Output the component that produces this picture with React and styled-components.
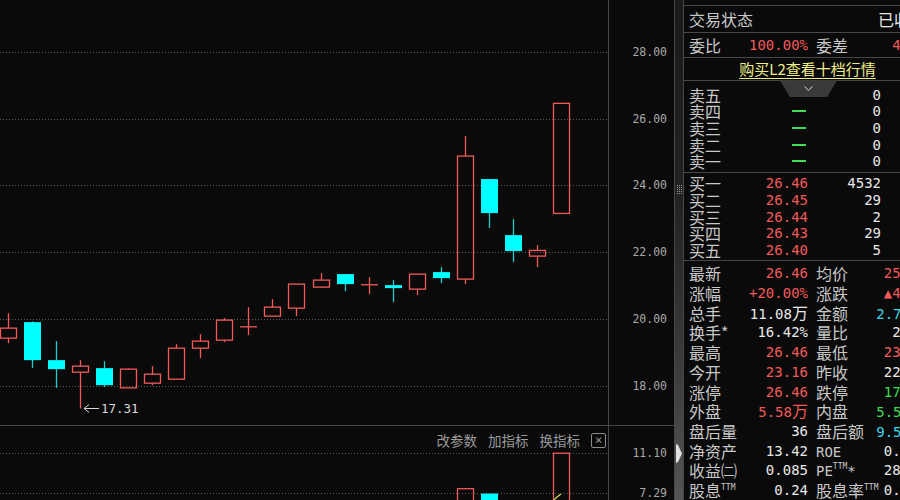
import React from 'react';
import styled, { createGlobalStyle } from 'styled-components';
import { ChevronDown } from 'lucide-react';

const RED = '#f25a5a';
const CYAN = '#00ffff';
const GREEN = '#3fdc55';
const LINE = '#474747';
const CJK = `"Noto Sans CJK SC", "Noto Sans", sans-serif`;
const MONO = `"DejaVu Sans Mono", "Liberation Mono", "Noto Sans CJK SC", monospace`;

const tones = {
  label: '#c8c8c8',
  white: '#e8e8e8',
  red: RED,
  green: GREEN,
  cyan: '#3cd6e6',
};

// o, h, l, c, volume (万)
const candles = [
  [19.42, 20.17, 19.27, 19.72, 3.1],
  [19.9, 19.92, 18.52, 18.76, 4.2],
  [18.76, 19.33, 17.93, 18.49, 3.6],
  [18.4, 18.76, 17.31, 18.58, 3.9],
  [18.52, 18.73, 17.96, 18.01, 2.8],
  [17.93, 18.52, 17.93, 18.49, 2.5],
  [18.07, 18.58, 18.01, 18.34, 2.2],
  [18.19, 19.24, 18.19, 19.12, 3.4],
  [19.12, 19.54, 18.82, 19.33, 3.0],
  [19.36, 20.02, 19.3, 19.96, 3.3],
  [19.74, 20.35, 19.51, 19.76, 2.9],
  [20.08, 20.59, 20.08, 20.35, 2.6],
  [20.32, 21.04, 20.08, 21.04, 3.5],
  [20.95, 21.37, 20.92, 21.16, 2.7],
  [21.34, 21.34, 20.83, 21.04, 2.4],
  [21.0, 21.25, 20.74, 21.02, 2.1],
  [21.01, 21.16, 20.5, 20.92, 2.3],
  [20.89, 21.34, 20.71, 21.34, 2.6],
  [21.4, 21.55, 21.07, 21.22, 2.2],
  [21.19, 25.48, 21.04, 24.88, 7.7],
  [24.19, 24.19, 22.72, 23.17, 7.24],
  [22.51, 22.99, 21.7, 22.03, 5.1],
  [21.88, 22.21, 21.55, 22.05, 3.8],
  [23.16, 26.46, 23.16, 26.46, 11.08],
];

const priceTicks = [28, 26, 24, 22, 20, 18];
const toY = p => 52 + (28 - p) * 33.35;
const toX = i => Math.round(8 + i * 24.04);
const volY = v => 27 + (11.1 - v) * 10.5;

const GlobalStyle = createGlobalStyle`
  html, body {
    margin: 0;
    overflow: hidden;
    background: #0a0a0a;
  }
`;

const Page = styled.div`
  display: flex;
  width: 930px;
  height: 500px;
  background: #0a0a0a;
`;

const ChartColumn = styled.div`
  flex: 0 0 674px;
  display: flex;
  flex-direction: column;
`;

const Pane = styled.div`
  display: flex;
  height: ${p => p.$h}px;
  box-sizing: border-box;
  border-bottom: ${p => (p.$divided ? `1px solid ${LINE}` : 'none')};
`;

const Plot = styled.div`
  position: relative;
  flex: 0 0 608px;
  overflow: hidden;
  svg {
    display: block;
  }
`;

const Axis = styled.div`
  flex: 1;
  border-left: 1px solid ${LINE};
  svg {
    display: block;
  }
`;

const Toolbar = styled.div`
  position: absolute;
  top: 6px;
  right: 2px;
  display: flex;
  align-items: center;
  gap: 11px;
  font-family: ${CJK};
  font-size: 13.5px;
  line-height: 16px;
  color: #9a9a9a;
`;

const CloseBox = styled.span`
  display: flex;
  align-items: center;
  justify-content: center;
  width: 13px;
  height: 13px;
  border: 1px solid #8a8a8a;
  border-radius: 2px;
  font-family: ${MONO};
  font-size: 12px;
  line-height: 1;
  color: #9a9a9a;
`;

const Splitter = styled.div`
  flex: 0 0 9px;
  box-sizing: border-box;
  border-left: 1px solid ${LINE};
  display: flex;
  flex-direction: column;
  align-items: center;
  background: linear-gradient(to bottom, #1a1a1a 0%, #222 40%, #3d3d3d 75%, #555 100%);
`;

const Grip = styled.svg`
  margin-top: 185px;
`;

const Handle = styled.svg`
  margin-top: 250px;
`;

const Panel = styled.aside`
  flex: 0 0 247px;
  box-sizing: border-box;
  border-left: 1px solid ${LINE};
  padding-top: 5px;
  display: flex;
  flex-direction: column;
  color: #c8c8c8;
  font-family: ${CJK};
`;

const Section = styled.div`
  position: relative;
  border-top: 1px solid ${LINE};
  height: ${p => p.$h}px;
  padding: ${p => p.$pt || 0}px 4px 0 5px;
  box-sizing: border-box;
  display: flex;
  flex-direction: column;
  justify-content: ${p => (p.$center ? 'center' : 'flex-start')};
`;

const StatusRow = styled.div`
  display: flex;
  align-items: center;
  justify-content: space-between;
`;

const Grid = styled.div`
  display: grid;
  grid-template-columns: 56px 63px 62px 56px;
  align-items: center;
  height: ${p => p.$h}px;
`;

const OrderRow = styled.div`
  display: grid;
  grid-template-columns: 56px 63px 73px;
  align-items: center;
  height: 16.7px;
`;

const Label = styled.span`
  font-family: ${CJK};
  font-size: 16px;
  line-height: 16px;
  color: ${p => tones[p.$tone || 'label']};
  white-space: nowrap;
  padding-left: ${p => (p.$indent ? 8 : 0)}px;
`;

const Latin = styled.span`
  font-family: ${MONO};
  font-size: 14px;
`;

const Sup = styled.sup`
  font-family: ${MONO};
  font-size: 8px;
  vertical-align: 7px;
  line-height: 0;
`;

const Value = styled.span`
  font-family: ${MONO};
  font-size: 14px;
  line-height: 16px;
  text-align: right;
  white-space: nowrap;
  color: ${p => tones[p.$tone || 'white']};
`;

const Unit = styled.span`
  font-family: ${CJK};
  font-size: 16px;
`;

const Dash = styled.span`
  justify-self: end;
  width: 14px;
  height: 2px;
  margin-right: 2px;
  background: ${GREEN};
`;

const Promo = styled.a`
  align-self: center;
  font-size: 15px;
  line-height: 18px;
  color: #eeee88;
  text-decoration: underline;
  text-underline-offset: 3px;
  cursor: pointer;
`;

const Tab = styled.div`
  position: absolute;
  top: -1px;
  left: 96px;
  width: 57px;
  height: 17px;
  display: flex;
  justify-content: center;
  align-items: center;
  background: #3a3a3a;
  clip-path: polygon(0 0, 100% 0, calc(100% - 10px) 100%, 10px 100%);
  color: #dcdcdc;
`;

const Candle = ({ i, o, h, l, c }) => {
  const x = toX(i);
  const up = c >= o;
  const top = toY(Math.max(o, c));
  const bot = toY(Math.min(o, c));
  const flat = bot - top < 2;
  if (up) {
    return (
      <g stroke={RED} strokeWidth="1.3" fill="none">
        <line x1={x + 0.5} x2={x + 0.5} y1={toY(h)} y2={flat ? toY(l) : top} />
        {!flat && <line x1={x + 0.5} x2={x + 0.5} y1={bot} y2={toY(l)} />}
        {flat ? (
          <line x1={x - 8} x2={x + 9} y1={top} y2={top} />
        ) : (
          <rect x={x - 7.5} y={top} width={16} height={bot - top} />
        )}
      </g>
    );
  }
  return (
    <g>
      <line x1={x + 0.5} x2={x + 0.5} y1={toY(h)} y2={toY(l)} stroke="#22cccc" strokeWidth="1.3" />
      <rect x={x - 8} y={top} width={17} height={Math.max(bot - top, 3)} fill={CYAN} />
    </g>
  );
};

const MainChart = () => (
  <svg width="608" height="425">
    {priceTicks.map(p => (
      <line key={p} x1="0" x2="608" y1={Math.round(toY(p)) + 0.5} y2={Math.round(toY(p)) + 0.5}
        stroke="#5a5a5a" strokeDasharray="1 2" />
    ))}
    {candles.map(([o, h, l, c], i) => (
      <Candle key={i} i={i} o={o} h={h} l={l} c={c} />
    ))}
    <g stroke="#d8d8d8" strokeWidth="1" fill="none">
      <line x1="84" x2="99" y1="408.5" y2="408.5" />
      <polyline points="89,404.5 84,408.5 89,412.5" />
    </g>
    <text x="101" y="413" fill="#d8d8d8" fontFamily={MONO} fontSize="12.5">17.31</text>
  </svg>
);

const VolumeChart = () => (
  <svg width="608" height="74">
    {[27, 67].map(y => (
      <line key={y} x1="0" x2="608" y1={y + 0.5} y2={y + 0.5} stroke="#5a5a5a" strokeDasharray="1 2" />
    ))}
    {candles.map(([o, , , c, v], i) => {
      const x = toX(i);
      const y = volY(v);
      return c >= o ? (
        <rect key={i} x={x - 7.5} y={y} width={16} height={80} fill="none" stroke={RED} strokeWidth="1.3" />
      ) : (
        <rect key={i} x={x - 8} y={y} width={17} height={80} fill={CYAN} />
      );
    })}
    <polyline points="552,76 557,71 561,68" stroke="#d8d860" fill="none" strokeWidth="1.2" />
  </svg>
);

const AxisLabels = ({ ticks, height }) => (
  <svg width="65" height={height}>
    {ticks.map(([label, y]) => (
      <text key={label} x="58" y={y + 4} textAnchor="end" fill="#a8a8a8" fontFamily={MONO} fontSize="11.5">
        {label}
      </text>
    ))}
  </svg>
);

const sells = ['卖五', '卖四', '卖三', '卖二', '卖一'];
const buys = [
  ['买一', '26.46', '4532'],
  ['买二', '26.45', '29'],
  ['买三', '26.44', '2'],
  ['买四', '26.43', '29'],
  ['买五', '26.40', '5'],
];

const stats = [
  ['最新', ['26.46', 'red'], '均价', ['25.18', 'red']],
  ['涨幅', ['+20.00%', 'red'], '涨跌', ['▲4.41', 'red']],
  ['总手', ['11.08', 'white', '万'], '金额', ['2.79', 'cyan', '亿']],
  ['换手*', ['16.42%', 'white'], '量比', ['2.33', 'white']],
  ['最高', ['26.46', 'red'], '最低', ['23.05', 'red']],
  ['今开', ['23.16', 'red'], '昨收', ['22.05', 'white']],
  ['涨停', ['26.46', 'red'], '跌停', ['17.64', 'green']],
  ['外盘', ['5.58', 'red', '万'], '内盘', ['5.50', 'green', '万']],
  ['盘后量', ['36', 'white'], '盘后额', ['9.52', 'cyan', '万']],
  ['净资产', ['13.42', 'white'], <Latin>ROE</Latin>, ['0.65%', 'white']],
  ['收益㈡', ['0.085', 'white'], <><Latin>PE</Latin><Sup>TTM</Sup><Latin>*</Latin></>, ['28.79', 'white']],
  [<>股息<Sup>TTM</Sup></>, ['0.24', 'white'], <>股息率<Sup>TTM</Sup></>, ['0.91%', 'white']],
];

const Num = ({ v: [text, tone, unit] }) => (
  <Value $tone={tone}>
    {text}
    {unit && <Unit>{unit}</Unit>}
  </Value>
);

const QuotePanel = () => (
  <Panel>
    <Section $h={27} $center>
      <StatusRow>
        <Label>交易状态</Label>
        <Label $tone="white">已收盘</Label>
      </StatusRow>
    </Section>
    <Section $h={25} $center>
      <Grid $h={24}>
        <Label>委比</Label>
        <Value $tone="red">100.00%</Value>
        <Label $indent>委差</Label>
        <Value $tone="red">4597</Value>
      </Grid>
    </Section>
    <Section $h={24} $center>
      <Promo>购买L2查看十档行情</Promo>
    </Section>
    <Section $h={93} $pt={5}>
      <Tab>
        <ChevronDown size={15} strokeWidth={1.6} />
      </Tab>
      {sells.map(s => (
        <OrderRow key={s}>
          <Label>{s}</Label>
          <Dash />
          <Value>0</Value>
        </OrderRow>
      ))}
    </Section>
    <Section $h={89} $pt={1.7}>
      {buys.map(([name, price, vol]) => (
        <OrderRow key={name}>
          <Label>{name}</Label>
          <Value $tone="red">{price}</Value>
          <Value>{vol}</Value>
        </OrderRow>
      ))}
    </Section>
    <Section $h={240} $pt={2.5}>
      {stats.map(([a, av, b, bv], i) => (
        <Grid key={i} $h={20.4}>
          <Label>{a}</Label>
          <Num v={av} />
          <Label $indent>{b}</Label>
          <Num v={bv} />
        </Grid>
      ))}
    </Section>
  </Panel>
);

export default function App() {
  return (
    <>
      <GlobalStyle />
      <Page>
        <ChartColumn>
          <Pane $h={426} $divided>
            <Plot>
              <MainChart />
            </Plot>
            <Axis>
              <AxisLabels height={425} ticks={priceTicks.map(p => [p.toFixed(2), Math.round(toY(p))])} />
            </Axis>
          </Pane>
          <Pane $h={74}>
            <Plot>
              <VolumeChart />
              <Toolbar>
                <span>改参数</span>
                <span>加指标</span>
                <span>换指标</span>
                <CloseBox>×</CloseBox>
              </Toolbar>
            </Plot>
            <Axis>
              <AxisLabels height={74} ticks={[['11.10', 27], ['7.29', 67]]} />
            </Axis>
          </Pane>
        </ChartColumn>
        <Splitter>
          <Grip width="5" height="9">
            {[0, 2, 4, 6, 8].map(y => [0, 2, 4].map(x => (
              <rect key={`${x}-${y}`} x={x} y={y} width="1" height="1" fill="#9a9a9a" />
            )))}
          </Grip>
          <Handle width="6" height="19">
            <polygon points="0,0 2,1 6,9.5 2,18 0,19" fill="#e0e0e0" />
          </Handle>
        </Splitter>
        <QuotePanel />
      </Page>
    </>
  );
}
